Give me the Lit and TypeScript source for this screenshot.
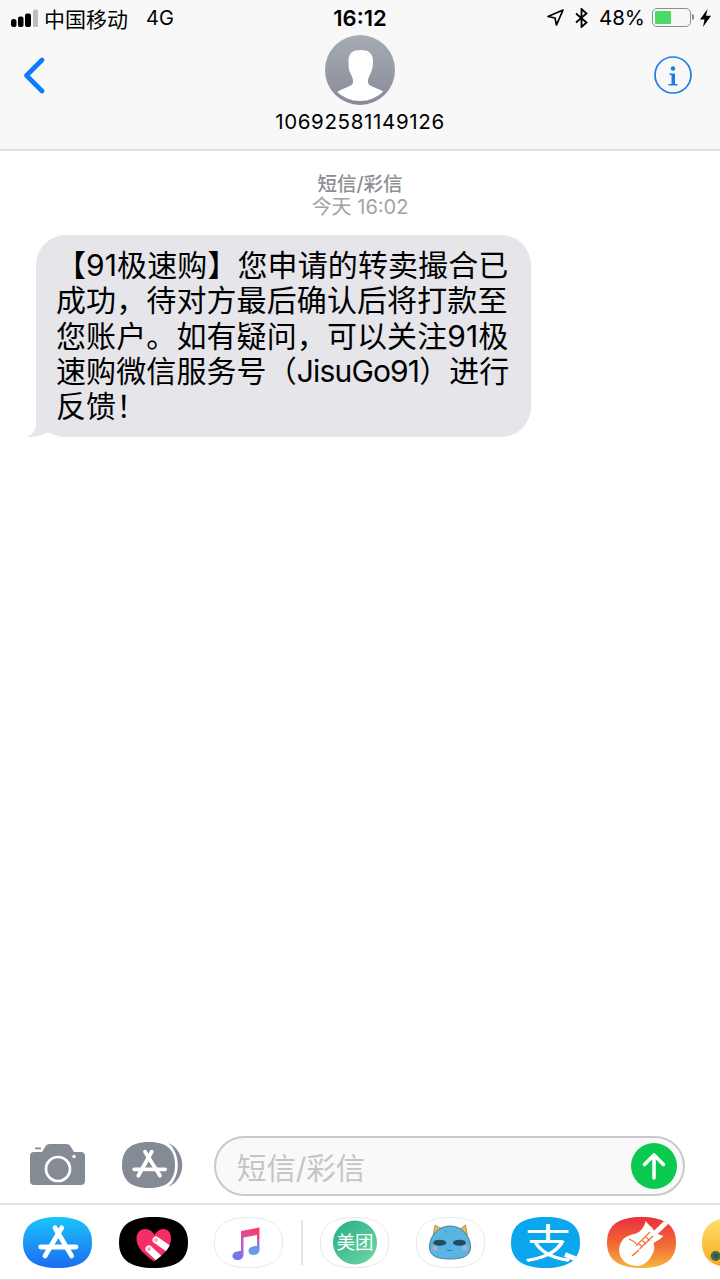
import { LitElement, html, css, svg } from "lit";
import { customElement } from "lit/decorators.js";

const CAPSULE = "M0 25.5C0 7 13 0 34.5 0S69 7 69 25.5 56 51 34.5 51 0 44 0 25.5Z";
const HEART = "M35 44.500C26 38 17.500 31 17.500 21.500 17.500 15 22 12 26.500 12 30 12 33.500 14 35.500 18 37.500 14 41 12 44 12 48.500 12 52 15 52 21.500 52 31 44 38 35 44.500Z";

const ringed = () => svg`
  <path d=${CAPSULE} transform="translate(.5 .5) scale(.985)" fill="#fff" stroke="#e8e8e8" stroke-width="1" />
`;

@customElement("app-root")
export class AppRoot extends LitElement {
  static styles = css`
    :host {
      display: flex;
      flex-direction: column;
      width: 720px;
      height: 1280px;
      overflow: hidden;
      background: #fff;
      color: #000;
      font-family: Inter, "Noto Sans CJK SC", sans-serif;
    }
    svg {
      display: block;
      flex: none;
    }
    .top {
      background: #f8f8f8;
      border-bottom: 2px solid #e2e2e2;
      height: 149px;
      flex: none;
    }
    .status {
      display: grid;
      grid-template-columns: 1fr auto 1fr;
      align-items: center;
      height: 35px;
      font-size: 21px;
    }
    .status-left {
      display: flex;
      align-items: center;
      padding-left: 11px;
    }
    .carrier {
      margin-left: 6px;
    }
    .network {
      margin-left: 18px;
      font-size: 20px;
    }
    .time {
      font-weight: 600;
      font-size: 22px;
    }
    .status-right {
      display: flex;
      align-items: center;
      justify-content: flex-end;
      padding-right: 9px;
    }
    .bluetooth {
      margin-left: 11px;
    }
    .percent {
      margin: 0 7px 0 11px;
      font-size: 20.5px;
    }
    .battery {
      position: relative;
      box-sizing: border-box;
      width: 39px;
      height: 19px;
      border: 1.5px solid #8c8c8c;
      border-radius: 5px;
      padding: 2px;
      margin-right: 5px;
    }
    .battery::after {
      content: "";
      position: absolute;
      right: -4px;
      top: 5px;
      width: 2px;
      height: 6px;
      border-radius: 0 2px 2px 0;
      background: #8c8c8c;
    }
    .battery-fill {
      width: 47%;
      height: 100%;
      background: #4cd964;
      border-radius: 1px;
    }
    .bolt {
      margin-left: 4px;
    }
    .nav {
      display: grid;
      grid-template-columns: 1fr auto 1fr;
      align-items: start;
    }
    .back {
      margin: 22px 0 0 23px;
    }
    .contact {
      display: flex;
      flex-direction: column;
      align-items: center;
    }
    .number {
      margin-top: 5px;
      font-size: 20.5px;
      line-height: 24px;
      letter-spacing: 0.65px;
    }
    .info {
      margin: 21px 28px 0 0;
      justify-self: end;
    }
    .thread {
      flex: 1;
      display: flex;
      flex-direction: column;
    }
    .stamp {
      margin-top: 22px;
      text-align: center;
      line-height: 23px;
    }
    .kind {
      color: #8e8e93;
      font-size: 19.5px;
      font-weight: 500;
    }
    .when {
      color: #a2a2a7;
      font-size: 20px;
    }
    .bubble {
      position: relative;
      align-self: flex-start;
      box-sizing: border-box;
      width: 495px;
      height: 202px;
      margin: 16px 0 0 36px;
      padding: 13px 0 0 20px;
      background: #e5e5ea;
      border-radius: 30px;
      font-size: 30px;
      line-height: 35.3px;
      letter-spacing: 0.1px;
      white-space: nowrap;
    }
    .latin {
      letter-spacing: -0.85px;
    }
    .tail {
      position: absolute;
      left: -11px;
      bottom: 0;
    }
    .composer {
      display: flex;
      align-items: center;
      height: 73px;
      padding: 0 0 1px 30px;
      flex: none;
      box-sizing: border-box;
    }
    .camera {
      margin-bottom: 2px;
    }
    .apps-btn {
      margin: 0 0 2px 36px;
    }
    .field {
      box-sizing: border-box;
      display: flex;
      align-items: center;
      justify-content: space-between;
      width: 471px;
      height: 60px;
      margin-left: 30px;
      padding: 0 6px 0 21px;
      border: 2px solid #c8c8cd;
      border-radius: 30px;
      background: #f9f9f9;
      color: #c4c4c8;
      font-size: 29.4px;
    }
    .tray {
      display: flex;
      align-items: center;
      flex: none;
      height: 77px;
      padding-left: 23px;
      box-sizing: border-box;
      border-top: 2px solid #e4e4e4;
      border-bottom: 1px solid #dcdcdc;
      gap: 26.5px;
      overflow: hidden;
    }
    .divider {
      width: 2px;
      height: 45px;
      background: #e4e4ee;
      flex: none;
      margin: 0 -9px 0 -9px;
    }
    .pay {
      overflow: visible;
    }
  `;

  renderStatus() {
    return html`
      <div class="status">
        <div class="status-left">
          <svg width="27" height="18" viewBox="0 0 27 18">
            <rect x="0" y="10" width="5.500" height="8" rx="2.500" fill="#000" />
            <rect x="7" y="7.500" width="5.500" height="10.500" rx="2" fill="#000" />
            <rect x="14" y="4.500" width="6" height="13.500" rx="2" fill="#000" />
            <rect x="22" y="0.500" width="5" height="17.500" rx="1.500" fill="#bdbdbd" />
          </svg>
          <span class="carrier">中国移动</span>
          <span class="network">4G</span>
        </div>
        <div class="time">16:12</div>
        <div class="status-right">
          <svg width="17" height="17" viewBox="0 0 17 17">
            <path d="M16 1 1 7.500 8 9 9.500 16Z" fill="none" stroke="#000" stroke-width="1.700" stroke-linejoin="round" />
          </svg>
          <svg class="bluetooth" width="13" height="20" viewBox="0 0 13 20">
            <path d="M1 5.500 11.500 14.500 6.500 19V1L11.500 5.500 1 14.500" fill="none" stroke="#000" stroke-width="1.800" />
          </svg>
          <span class="percent">48%</span>
          <div class="battery"><div class="battery-fill"></div></div>
          <svg class="bolt" width="11" height="18" viewBox="0 0 11 18">
            <path d="M7.500 0 0 10.500H4.500L3 18 11 6.800H6Z" fill="#000" />
          </svg>
        </div>
      </div>
    `;
  }

  renderNav() {
    return html`
      <div class="nav">
        <svg class="back" width="22" height="37" viewBox="0 0 22 37">
          <path d="M19 3 3.500 18.500 19 34" fill="none" stroke="#0a7aff" stroke-width="4.600" stroke-linecap="round" stroke-linejoin="round" />
        </svg>
        <div class="contact">
          <svg width="70" height="70" viewBox="0 0 70 70">
            <defs>
              <linearGradient id="avatarBg" x1="0" y1="0" x2="0" y2="1">
                <stop offset="0" stop-color="#a7abb5" />
                <stop offset="1" stop-color="#868b95" />
              </linearGradient>
              <clipPath id="avatarClip"><circle cx="35" cy="32.500" r="33.500" /></clipPath>
            </defs>
            <circle cx="35" cy="35" r="35" fill="url(#avatarBg)" />
            <path
              clip-path="url(#avatarClip)"
              d="M35.500 15C28 15 23.500 18 23.500 26 23.500 30 23.500 33 24.500 36 25.500 39 27.500 42 28 45 28.300 47 28 49 26.500 50 22 53 14 54 9 60L4 70H66L62 60C57 54 49 53 44.500 50 43 49 42.700 47 43 45 43.500 42 45.500 39 46.500 36 47.500 33 48 30 48 26 48 18 43 15 35.500 15Z"
              fill="#fff"
            />
          </svg>
          <div class="number">10692581149126</div>
        </div>
        <svg class="info" width="38" height="38" viewBox="0 0 38 38">
          <circle cx="19" cy="19" r="18" fill="none" stroke="#1a7ee6" stroke-width="1.700" />
          <circle cx="19" cy="12.500" r="2.300" fill="#1a7ee6" />
          <path d="M15.500 17.500H21V28H23.500V29.500H14.500V28H17.500V19H15.500Z" fill="#1a7ee6" />
        </svg>
      </div>
    `;
  }

  renderComposer() {
    return html`
      <div class="composer">
        <svg class="camera" width="56" height="42" viewBox="0 0 56 42">
          <path
            d="M4 8H12L15 3C16 1 17.500 0 20 0H36C38.500 0 40 1 41 3L44 8H51C53.500 8 55 9.500 55 12V37C55 39.500 53.500 41 51 41H4C1.500 41 0 39.500 0 37V12C0 9.500 1.500 8 4 8Z"
            fill="#858b95"
          />
          <rect x="5" y="3.500" width="6" height="1.800" fill="#858b95" />
          <circle cx="28" cy="25" r="12" fill="none" stroke="#fff" stroke-width="2.700" />
          <circle cx="44" cy="12.500" r="1.700" fill="#fff" />
        </svg>
        <svg class="apps-btn" width="62" height="46" viewBox="0 0 62 46">
          <path d="M0 23C0 6 11 0 27 0S53 6 53 23 43 46 27 46 0 40 0 23Z" fill="#858b95" />
          <path d="M46 1C65 9 65 37 46 45 59 36 59 10 46 1Z" fill="#858b95" />
          <g fill="none" stroke="#fff" stroke-width="3.800" stroke-linecap="round">
            <path d="M29.700 9.700 16.300 33.700" />
            <path d="M23 9.700 38 33.700" />
            <path d="M12.300 27.300H43" />
          </g>
        </svg>
        <div class="field">
          <span>短信/彩信</span>
          <svg width="46" height="46" viewBox="0 0 46 46">
            <circle cx="23" cy="23" r="23" fill="#0ac94f" />
            <path d="M23 35V12M13.500 21.500 23 12 32.500 21.500" fill="none" stroke="#fff" stroke-width="3.600" stroke-linecap="round" stroke-linejoin="round" />
          </svg>
        </div>
      </div>
    `;
  }

  renderTray() {
    return html`
      <div class="tray">
        <svg width="69" height="51" viewBox="0 0 69 51">
          <defs>
            <linearGradient id="storeBg" x1="0" y1="0" x2="0" y2="1">
              <stop offset="0" stop-color="#1ac4fb" />
              <stop offset="1" stop-color="#1c6cf0" />
            </linearGradient>
          </defs>
          <path d=${CAPSULE} fill="url(#storeBg)" />
          <g fill="none" stroke="#fff" stroke-width="4.800" stroke-linecap="round">
            <path d="M38.700 10.700 22 39" />
            <path d="M32 10.700 48.700 39" />
            <path d="M17.700 30H53" />
          </g>
        </svg>
        <svg width="69" height="51" viewBox="0 0 69 51">
          <defs>
            <clipPath id="heartClip"><path d=${HEART} /></clipPath>
          </defs>
          <path d=${CAPSULE} fill="#000" />
          <path d=${HEART} fill="#f92d66" />
          <g clip-path="url(#heartClip)" stroke-linecap="round">
            <path d="M37 23 54 35" stroke="#fff" stroke-width="7" />
            <path d="M30 32 44 45" stroke="#fff" stroke-width="7" />
            <circle cx="37" cy="23" r="2" fill="#f7a9bd" />
            <circle cx="30" cy="32" r="2" fill="#f7a9bd" />
          </g>
        </svg>
        <svg width="69" height="51" viewBox="0 0 69 51">
          <defs>
            <linearGradient id="noteBg" x1="0.700" y1="0" x2="0.300" y2="1">
              <stop offset="0" stop-color="#fa3c5c" />
              <stop offset="0.550" stop-color="#c45cc8" />
              <stop offset="1" stop-color="#6a78f0" />
            </linearGradient>
            <linearGradient id="noteTip" x1="0" y1="0" x2="0" y2="1">
              <stop offset="0" stop-color="#a86adf" />
              <stop offset="1" stop-color="#4fa8f0" />
            </linearGradient>
          </defs>
          ${ringed()}
          <path
            d="M27 14 45.500 10.500V22H43V18L29.500 20.500V37.500C29.500 41 27 43 23.500 43 20.500 43 18.500 41.500 18.500 39 18.500 36.500 20.500 35 23 34.500L27 33.700Z"
            fill="url(#noteBg)"
          />
          <path d="M43 22H45.500V32.500C45.500 36 43 38 39.500 38 36.500 38 34.500 36.500 34.500 34 34.500 31.500 36.500 30 39 29.500L43 28.700Z" fill="url(#noteTip)" />
        </svg>
        <div class="divider"></div>
        <svg width="69" height="51" viewBox="0 0 69 51">
          <defs>
            <linearGradient id="meituanBg" x1="0" y1="0" x2="1" y2="1">
              <stop offset="0" stop-color="#27ad8a" />
              <stop offset="1" stop-color="#6ed8a0" />
            </linearGradient>
          </defs>
          ${ringed()}
          <circle cx="35" cy="25.500" r="22" fill="url(#meituanBg)" />
          <text x="35" y="32" text-anchor="middle" fill="#fff" font-size="18.500" font-family="'Noto Sans CJK SC', sans-serif">美团</text>
        </svg>
        <svg width="69" height="51" viewBox="0 0 69 51">
          ${ringed()}
          <path d="M17.300 18 19 8 26.500 12.500ZM51.300 18 49.500 8 43.500 12.500Z" fill="#f2b84a" stroke="#8a7a40" stroke-width=".7" />
          <path d="M34 9C46 9 54.500 19 54.500 30 54.500 39 47 42 34 42 21 42 13.500 39 13.500 30 13.500 19 22 9 34 9Z" fill="#5ab5e3" stroke="#4c7f94" stroke-width="1" />
          <ellipse cx="23.700" cy="25.700" rx="6.500" ry="3" fill="#1d4f5e" />
          <ellipse cx="43.500" cy="25.700" rx="6.500" ry="3" fill="#1d4f5e" />
          <path d="M29 15Q30 13.500 31 15M36.500 15Q37.500 13.500 38.500 15" fill="none" stroke="#3d7c98" stroke-width=".7" />
          <circle cx="19" cy="31" r="2.500" fill="#f2a8b8" opacity=".6" />
          <circle cx="49" cy="31" r="2.500" fill="#f2a8b8" opacity=".6" />
          <path d="M31 32.500 32.500 34 33.500 33 34.500 34 36 32.500" fill="none" stroke="#27556a" stroke-width=".8" />
        </svg>
        <svg class="pay" width="69" height="51" viewBox="0 0 69 51">
          <defs>
            <clipPath id="payClip"><path d=${CAPSULE} /></clipPath>
          </defs>
          <path d=${CAPSULE} fill="#0aa6ee" />
          <text transform="translate(37 41) scale(1.2 1)" text-anchor="middle" fill="#fff" font-size="40" font-family="'Noto Sans CJK SC', sans-serif">支</text>
          <path d="M54 37.500 70 44" clip-path="url(#payClip)" fill="none" stroke="#fff" stroke-width="5" />
        </svg>
        <svg width="69" height="51" viewBox="0 0 69 51">
          <defs>
            <linearGradient id="guitarBg" x1="0" y1="0" x2="0" y2="1">
              <stop offset="0" stop-color="#e8303f" />
              <stop offset="0.550" stop-color="#f26b35" />
              <stop offset="1" stop-color="#f8b63c" />
            </linearGradient>
            <clipPath id="guitarClip"><path d=${CAPSULE} /></clipPath>
          </defs>
          <path d=${CAPSULE} fill="url(#guitarBg)" />
          <g clip-path="url(#guitarClip)">
            <path d="M45 19 65 0" stroke="#fff" stroke-width="5" />
            <path
              d="M38 4C39 7 36 10 34.700 12.300 32 16 29 16.500 26.300 17.300 21 19 17.500 20 15 24 12 28 11.500 33 13 38 15 44 20 48 29.700 49 37 48.500 42 44 45 38 47.500 34 48 30 46.500 26.500 49 24 53 23 56.300 19L48 16C47 13 45 10 43 9 41 7 40 5 38 4Z"
              fill="#fff"
            />
            <g fill="none" stroke="#f2703a">
              <path d="M29 29 43 15" stroke-width="1.300" />
              <path d="M32.500 32 46 19" stroke-width="1.300" />
              <path d="M32 27 35.500 30M35.500 23.500 39 27M39 20 42.500 23.500" stroke-width="1.200" />
              <path d="M22 22Q27 24 29.500 27" stroke-width="1.200" />
              <path d="M25 39 32 33" stroke-width="1.500" />
            </g>
          </g>
        </svg>
        <svg width="69" height="51" viewBox="0 0 69 51">
          <defs>
            <linearGradient id="emojiBg" x1="0" y1="0" x2="0" y2="1">
              <stop offset="0" stop-color="#ffe06a" />
              <stop offset="1" stop-color="#f8a81c" />
            </linearGradient>
          </defs>
          <path d=${CAPSULE} fill="url(#emojiBg)" />
          <circle cx="13.700" cy="39" r="5" fill="#4a6a3a" />
          <circle cx="13.700" cy="39" r="2" fill="#1f4f8a" />
        </svg>
      </div>
    `;
  }

  render() {
    return html`
      <div class="top">
        ${this.renderStatus()} ${this.renderNav()}
      </div>
      <div class="thread">
        <div class="stamp">
          <div class="kind">短信/彩信</div>
          <div class="when">今天 16:02</div>
        </div>
        <div class="bubble">
          <svg class="tail" width="30" height="30" viewBox="0 0 30 30">
            <path d="M11 0V18C11 22 7 28 2 30 9 30 17 29 23 25 25 26.500 28 27.500 30 28V0Z" fill="#e5e5ea" />
          </svg>
          【91极速购】您申请的转卖撮合已<br />成功，待对方最后确认后将打款至<br />您账户。如有疑问，可以关注91极<br />速购微信服务号（<span class="latin">JisuGo91</span>）进行<br />反馈！
        </div>
      </div>
      ${this.renderComposer()} ${this.renderTray()}
    `;
  }
}
